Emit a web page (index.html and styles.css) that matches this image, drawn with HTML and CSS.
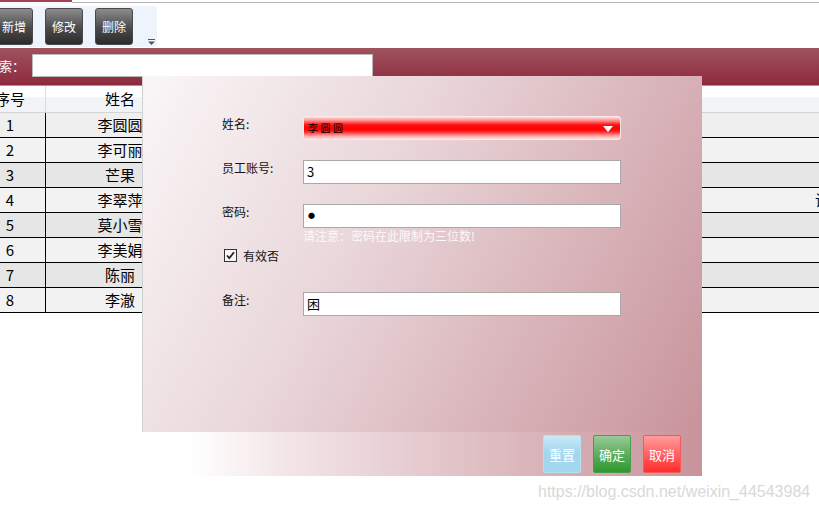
FILE: index.html
```html
<!DOCTYPE html>
<html lang="zh">
<head>
<meta charset="utf-8">
<title>员工管理</title>
<link rel="stylesheet" href="styles.css">
</head>
<body>
<div class="topline"><div class="topline-red"></div><div class="topline-gray"></div></div>
<div class="toolbar">
  <div class="tbtn">新增</div>
  <div class="tbtn">修改</div>
  <div class="tbtn">删除</div>
  <svg class="tb-more" width="7" height="6" viewBox="0 0 7 6"><rect x="0" y="0" width="7" height="1" fill="#555"/><path d="M0 2.5 H7 L3.5 6 Z" fill="#555"/></svg>
</div>
<div class="searchbar">
  <span class="search-label">搜索：</span>
  <div class="search-input"></div>
</div>
<div class="grid">
  <div class="row head"><div class="c1">序号</div><div class="c2">姓名</div><div class="c3"></div><div class="c4"></div></div>
  <div class="row r1"><div class="c1">1</div><div class="c2">李圆圆</div><div class="c3"></div><div class="c4"></div></div>
  <div class="row r2"><div class="c1">2</div><div class="c2">李可丽</div><div class="c3"></div><div class="c4"></div></div>
  <div class="row r3"><div class="c1">3</div><div class="c2">芒果</div><div class="c3"></div><div class="c4"></div></div>
  <div class="row r2"><div class="c1">4</div><div class="c2">李翠萍</div><div class="c3"></div><div class="c4">试用</div></div>
  <div class="row r3"><div class="c1">5</div><div class="c2">莫小雪</div><div class="c3"></div><div class="c4"></div></div>
  <div class="row r2"><div class="c1">6</div><div class="c2">李美娟</div><div class="c3"></div><div class="c4"></div></div>
  <div class="row r3"><div class="c1">7</div><div class="c2">陈丽</div><div class="c3"></div><div class="c4"></div></div>
  <div class="row r2"><div class="c1">8</div><div class="c2">李澈</div><div class="c3"></div><div class="c4"></div></div>
</div>

<div class="dialog">
  <div class="panel">
    <div class="frow">
      <div class="flabel">姓名:</div>
      <div class="combo"><span class="combo-text">李圆圆</span><svg class="combo-arrow" width="10" height="6" viewBox="0 0 10 6"><path d="M0 0 H10 L5 6 Z" fill="#fff"/></svg></div>
    </div>
    <div class="frow">
      <div class="flabel">员工账号:</div>
      <div class="finput">3</div>
    </div>
    <div class="frow nogap">
      <div class="flabel">密码:</div>
      <div class="finput pwd">●</div>
    </div>
    <div class="hint">请注意：密码在此限制为三位数!</div>
    <div class="checkrow">
      <span class="cbox"><svg width="11" height="11" viewBox="0 0 11 11"><path d="M2 5.5 L4.3 8.2 L9 2.2" fill="none" stroke="#222" stroke-width="1.8"/></svg></span>
      <span class="clabel">有效否</span>
    </div>
    <div class="frow">
      <div class="flabel">备注:</div>
      <div class="finput">困</div>
    </div>
  </div>
  <div class="footer">
    <div class="fbtn reset">重置</div>
    <div class="fbtn ok">确定</div>
    <div class="fbtn cancel">取消</div>
  </div>
</div>

<div class="watermark">https://blog.csdn.net/weixin_44543984</div>
</body>
</html>
```

FILE: styles.css
```css
html, body {
  margin: 0;
  padding: 0;
}
body {
  width: 819px;
  height: 511px;
  overflow: hidden;
  position: relative;
  background: #fff;
  font-family: "Noto Sans CJK SC", "Noto Sans", sans-serif;
  color: #000;
}

.topline {
  display: flex;
  height: 3px;
}
.topline-red {
  width: 72px;
  height: 2px;
  background: #a4434f;
}
.topline-gray {
  flex: 1;
  height: 1px;
  margin-top: 2px;
  background: #b4b4b4;
}

.toolbar {
  display: flex;
  gap: 12px;
  width: 165px;
  height: 41px;
  box-sizing: border-box;
  margin-top: 3px;
  margin-left: -8px;
  padding: 2px 2px 0 3px;
  background: #eef4fc;
  border-radius: 3px;
}
.tbtn {
  width: 38px;
  height: 37px;
  box-sizing: border-box;
  border: 1px solid #4a4a4a;
  border-radius: 3px;
  background: linear-gradient(#8c8c8c, #4a4a4a 55%, #2c2c2c);
  color: #fff;
  font-size: 12px;
  line-height: 36px;
  text-align: center;
}
.tb-more {
  align-self: flex-end;
  margin: 0 0 2px auto;
}

.searchbar {
  display: flex;
  align-items: flex-start;
  height: 37px;
  box-sizing: border-box;
  margin-top: 1px;
  padding-top: 6px;
  background: linear-gradient(#a0525f, #8d2a3d);
}
.search-label {
  margin-left: -14px;
  color: #fff;
  font-size: 13px;
  line-height: 23px;
}
.search-input {
  margin-left: 7px;
  width: 341px;
  height: 23px;
  box-sizing: border-box;
  background: #fff;
  border: 1px solid #b8b8b8;
}

.grid {
  margin-left: -25px;
}
.row {
  display: flex;
  width: 900px;
  height: 25px;
  box-sizing: border-box;
  border-bottom: 1px solid #000;
  font-size: 15px;
  line-height: 24px;
}
.row .c1 {
  width: 71px;
  box-sizing: border-box;
  border-right: 1px solid #000;
  text-align: center;
}
.row .c2 {
  width: 148px;
  text-align: center;
}
.row .c3 {
  width: 621px;
}
.row .c4 {
  flex: 1;
  white-space: nowrap;
}
.row.head {
  height: 28px;
  border-top: 1px solid #7d9ec8;
  border-bottom: 1px solid #d4d4d4;
  line-height: 25px;
  background: linear-gradient(#ffffff 0, #ffffff 40%, #f2f3f6 45%, #f2f3f6 100%);
}
.row.head .c1 {
  border-right-color: #dcdcdc;
}
.row.r1 { background: #efefef; }
.row.r2 { background: #f2f2f2; }
.row.r3 { background: #e6e6e6; }

.dialog {
  position: absolute;
  left: 142px;
  top: 76px;
  width: 560px;
}
.panel {
  height: 356px;
  box-sizing: border-box;
  padding: 40px 0 0 79px;
  border-left: 1px solid #cfcfcf;
  background: linear-gradient(118deg, #faf6f7 0%, #e9d6d9 40%, #c8939b 100%);
}
.frow {
  display: flex;
  align-items: flex-start;
  margin-bottom: 20px;
}
.frow.nogap {
  margin-bottom: 0;
}
.flabel {
  width: 81px;
  font-size: 12px;
  line-height: 15px;
  color: #111;
}
.finput {
  width: 318px;
  height: 24px;
  box-sizing: border-box;
  background: #fff;
  border: 1px solid #a8a8a8;
  padding-left: 3px;
  font-size: 13px;
  line-height: 22px;
  color: #000;
}
.finput.pwd {
  font-size: 7px;
  line-height: 20px;
  padding-left: 4px;
}
.combo {
  display: flex;
  align-items: center;
  justify-content: space-between;
  width: 318px;
  height: 24px;
  box-sizing: border-box;
  padding: 0 7px 0 4px;
  border: 1px solid #ffe8e8;
  border-radius: 3px;
  background: linear-gradient(#ffdcdc 0%, #ff9a9a 14%, #ff1010 36%, #ff0000 55%, #ff2020 66%, #ffa6a6 86%, #ffdede 100%);
}
.combo-text {
  font-size: 10px;
  letter-spacing: 2.5px;
  color: #000;
  line-height: 14px;
}
.combo-arrow {
  display: block;
  margin-top: 1px;
}
.hint {
  margin-left: 81px;
  font-size: 12px;
  line-height: 16px;
  color: #fdf8f8;
}
.checkrow {
  display: flex;
  align-items: center;
  margin: 5px 0 30px 2px;
  height: 13px;
}
.cbox {
  display: flex;
  align-items: center;
  justify-content: center;
  width: 13px;
  height: 13px;
  box-sizing: border-box;
  border: 1px solid #333;
  background: #f6f6f6;
}
.cbox svg {
  display: block;
}
.clabel {
  margin-left: 6px;
  font-size: 12px;
  line-height: 13px;
  color: #111;
}

.footer {
  display: flex;
  justify-content: flex-end;
  gap: 12px;
  height: 44px;
  box-sizing: border-box;
  padding: 3px 21px 0 0;
  background: linear-gradient(90deg, #ffffff 0, #ffffff 48px, #f3e6e8 140px, #c8939b 100%);
}
.fbtn {
  width: 38px;
  height: 38px;
  box-sizing: border-box;
  border-radius: 2px;
  color: #fff;
  font-size: 13px;
  line-height: 37px;
  text-align: center;
}
.fbtn.reset {
  background: linear-gradient(#cbe9f5, #a3d7ee 45%, #a3d7ee);
  border: 1px solid #b6dff0;
}
.fbtn.ok {
  background: linear-gradient(#97ca97, #5fae5f 50%, #2f982f);
  border: 1px solid #4a9e4a;
}
.fbtn.cancel {
  background: linear-gradient(#ff9c9c, #ff6464 50%, #ff2c2c);
  border: 1px solid #f05a5a;
}

.watermark {
  position: absolute;
  left: 538px;
  top: 482px;
  font-family: "Liberation Sans", Arial, sans-serif;
  font-size: 16px;
  line-height: 20px;
  color: #d9d9d9;
  white-space: nowrap;
}
```
